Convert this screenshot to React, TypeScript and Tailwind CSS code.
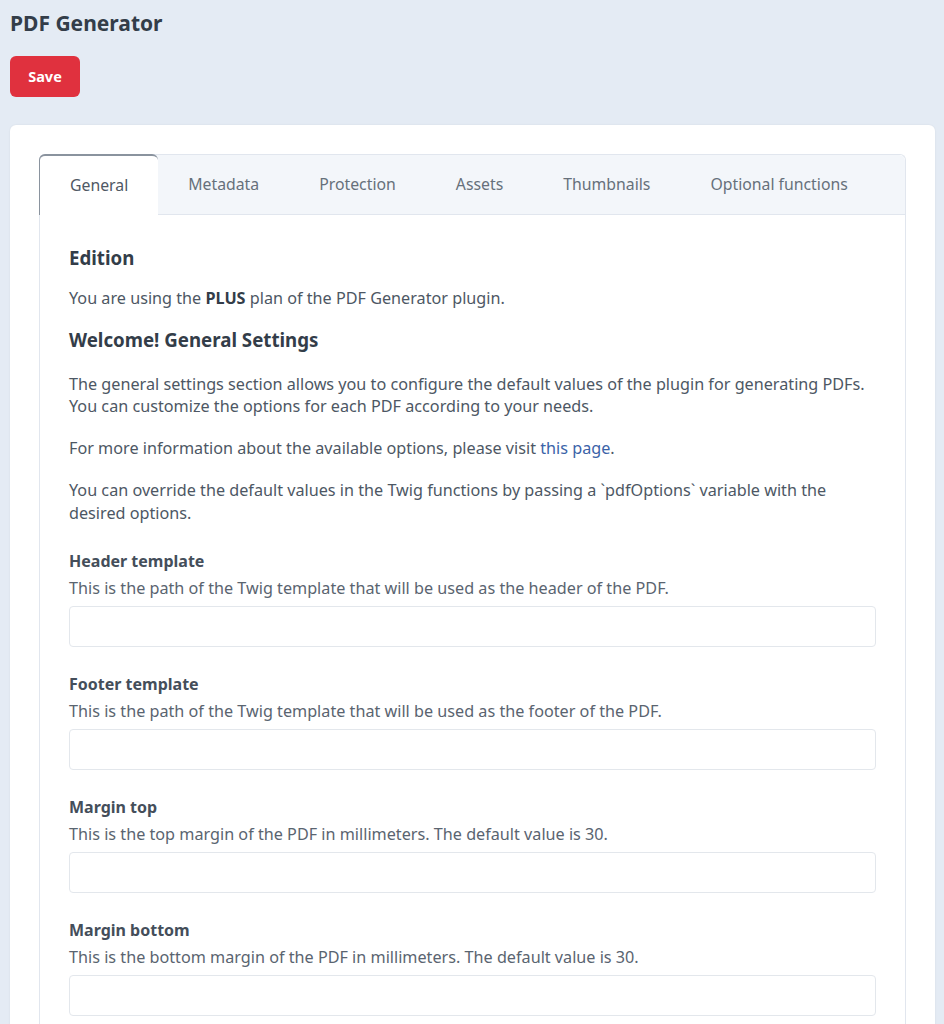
import React from 'react';

const tabs = ['General', 'Metadata', 'Protection', 'Assets', 'Thumbnails', 'Optional functions'];

const fields = [
  { label: 'Header template', desc: 'This is the path of the Twig template that will be used as the header of the PDF.' },
  { label: 'Footer template', desc: 'This is the path of the Twig template that will be used as the footer of the PDF.' },
  { label: 'Margin top', desc: 'This is the top margin of the PDF in millimeters. The default value is 30.' },
  { label: 'Margin bottom', desc: 'This is the bottom margin of the PDF in millimeters. The default value is 30.' },
];

const App: React.FC = () => {
  return (
    <div className="min-h-screen bg-[#e4ebf4] pl-[10px] pr-[9px] pt-[9px] font-['Noto_Sans',sans-serif] text-[#4d5764]">
      {/* Cabecera */}
      <h1 className="text-[21px] font-bold leading-[28px] text-[#333d49]">PDF Generator</h1>
      <button className="mt-[19px] h-[41px] w-[70px] rounded-[6px] bg-[#e0313e] text-[14.5px] font-bold text-white">Save</button>

      {/* Tarjeta principal */}
      <div className="mt-[28px] rounded-t-[6px] bg-white px-[29px] pt-[29px] shadow-[0_0_2px_rgba(0,0,0,0.08)]">
        <div className="rounded-t-[6px] border-x border-t border-[#e1e6ee]">
          <div className="flex h-[60px] rounded-t-[6px] border-b border-[#e1e6ee] bg-[#f3f6fa]">
            {tabs.map((t, i) => (
              <div
                key={t}
                className={
                  i === 0
                    ? 'relative -mb-px -mt-px -ml-px flex items-center rounded-t-[6px] border-t-2 border-l border-[#8a939e] bg-white px-[30px] text-[15.8px] text-[#4f5864]'
                    : 'flex items-center px-[30px] text-[15.8px] text-[#66707b]'
                }
              >
                {t}
              </div>
            ))}
          </div>

          <div className="px-[29px] pt-[31px] pb-[40px] text-[16.2px]">
            <h2 className="text-[18.7px] font-bold leading-[24px] text-[#333d49]">Edition</h2>
            <p className="mt-[17px] leading-[22px]">
              You are using the <b className="text-[#333d49]">PLUS</b> plan of the PDF Generator plugin.
            </p>
            <h2 className="mt-[19px] text-[18.7px] font-bold leading-[24px] text-[#333d49]">Welcome! General Settings</h2>
            <p className="mt-[21px] leading-[22px]">
              The general settings section allows you to configure the default values of the plugin for generating PDFs.
              <br />
              You can customize the options for each PDF according to your needs.
            </p>
            <p className="mt-[20px] leading-[22px]">
              For more information about the available options, please visit <a className="text-[#3b63a8]">this page</a>.
            </p>
            <p className="mt-[20px] leading-[23px]">
              You can override the default values in the Twig functions by passing a `pdfOptions` variable with the
              <br />
              desired options.
            </p>

            {fields.map((f, i) => (
              <div key={f.label} className={i === 0 ? 'mt-[25px]' : 'mt-[26px]'}>
                <label className="block text-[16px] font-bold leading-[22px] text-[#444e5a]">{f.label}</label>
                <p className="mt-[5px] leading-[22px] text-[#5a6470]">{f.desc}</p>
                <input className="mt-[7px] block h-[41px] w-full rounded-[4px] border border-[#e3e7ec] bg-white" />
              </div>
            ))}
          </div>
        </div>
      </div>
    </div>
  );
};

export default App;
